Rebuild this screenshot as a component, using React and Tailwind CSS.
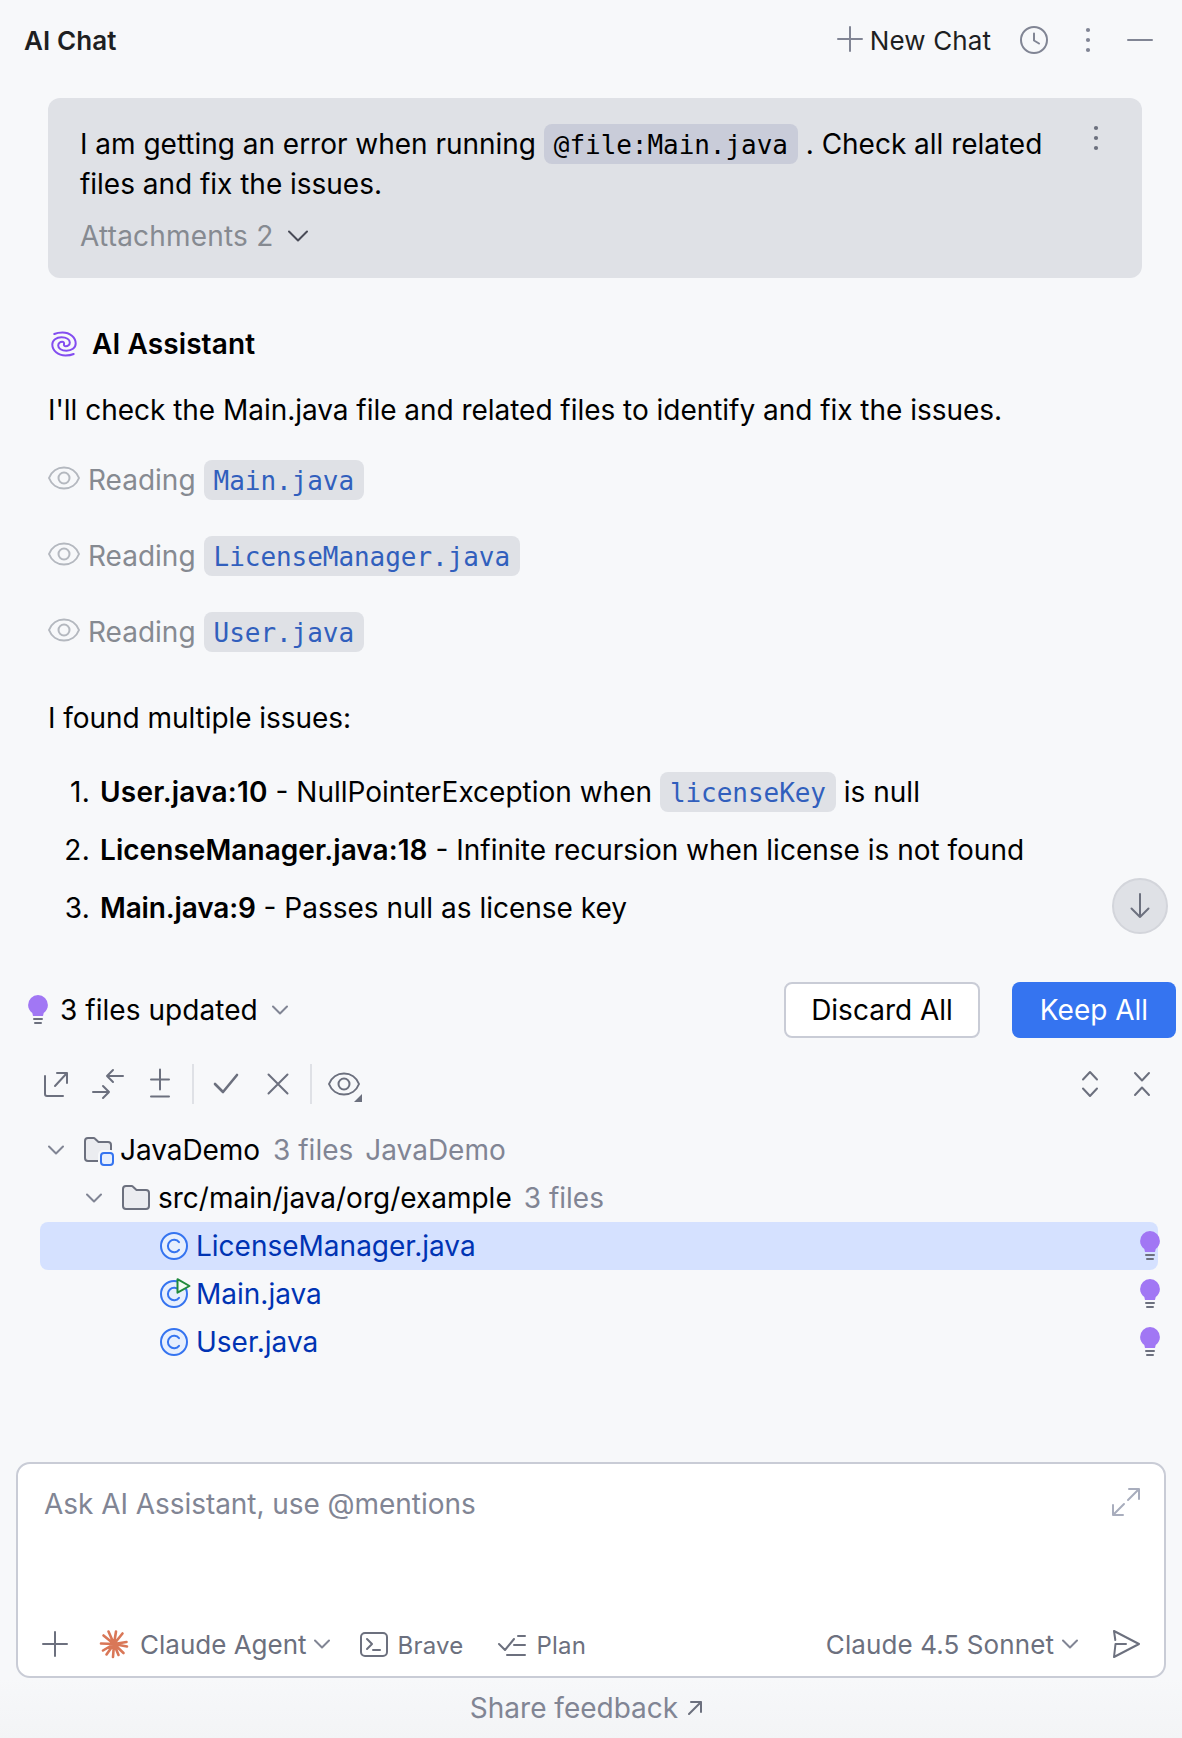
import React from 'react';

const Svg = ({ w = 32, h = 32, className = '', children }) => (
  <svg
    width={w}
    height={h}
    viewBox={`0 0 ${w} ${h}`}
    fill="none"
    stroke="currentColor"
    strokeWidth="2"
    strokeLinecap="round"
    strokeLinejoin="round"
    className={`shrink-0 ${className}`}
  >
    {children}
  </svg>
);

const PlusIcon = ({ className }) => (
  <Svg className={className}><path d="M16 4v24M4 16h24" /></Svg>
);

const ClockIcon = () => (
  <Svg><circle cx="16" cy="16" r="13" /><path d="M16 9.500v7l5 3" /></Svg>
);

const DotsIcon = () => (
  <Svg w={8}>
    <g fill="currentColor" stroke="none">
      <circle cx="4" cy="6" r="2.1" /><circle cx="4" cy="16" r="2.1" /><circle cx="4" cy="26" r="2.1" />
    </g>
  </Svg>
);

const Chevron = ({ className }) => (
  <Svg w={16} h={10} className={className}><path d="M1 1.500l7 7 7-7" /></Svg>
);

const EyeIcon = ({ className }) => (
  <Svg h={24} className={className}>
    <path d="M1 12C3.500 5.500 9.300 1.500 16 1.500S28.500 5.500 31 12c-2.500 6.500-8.300 10.500-15 10.500S3.500 18.500 1 12z" />
    <circle cx="16" cy="12" r="5.500" />
  </Svg>
);

// One arm of the spiral, drawn twice
const SPIRAL_ARM =
  'M6.300 6C9 4.800 12 4.500 14.500 4.500C22 4.500 27.700 9.500 27.700 15.500C27.700 20 23.500 22.700 18.500 22.700C13.500 22.700 10.200 20.600 10.200 17.500C10.200 15 12.200 13.700 14.200 13.700C15.500 13.700 16.400 14.600 16 16';

const SpiralIcon = () => (
  <Svg className="text-[#834df0]">
    <path d={SPIRAL_ARM} />
    <path d={SPIRAL_ARM} transform="rotate(180 16 16)" />
  </Svg>
);

const BulbIcon = () => (
  <Svg w={20}>
    <path d="M10 1a10 10 0 0 1 9.900 10c0 3.500-1.700 6-4.200 8l-.7 3H5l-.7-3C1.800 17 .1 14.500 .1 11A10 10 0 0 1 10 1z" fill="#a177f4" stroke="none" />
    <path d="M6 25h8M7 29h6" stroke="#6c707e" />
  </Svg>
);

const FolderShape = () => (
  <path d="M3 7a3 3 0 0 1 3-3h5.500a2 2 0 0 1 1.500.7L16.500 8H26a3 3 0 0 1 3 3v13a3 3 0 0 1-3 3H6a3 3 0 0 1-3-3z" fill="#ebecf0" stroke="#6c707e" />
);

const FolderIcon = () => <Svg><FolderShape /></Svg>;

const ModuleIcon = () => (
  <Svg>
    <FolderShape />
    <rect x="16" y="16" width="18" height="18" rx="5" fill="#f7f8fa" stroke="none" />
    <rect x="19" y="19" width="12" height="12" rx="3" fill="#e7effd" stroke="#3574f0" />
  </Svg>
);

const ClassIcon = ({ runnable }) => (
  <Svg className="overflow-visible">
    <circle cx="16" cy="16" r="13" fill="#e7effd" stroke="#3574f0" />
    <path d="M21 12.200a6.200 6.200 0 1 0 0 7.600" stroke="#3574f0" />
    {runnable && <path d="M19.500 1.200v13.500l12-6.700z" fill="#f2fcf3" stroke="#208a3c" />}
  </Svg>
);

const ClaudeIcon = () => (
  <Svg className="text-[#d97757]">
    <path
      d="M16 16L18 3.500M16 16L24.500 5.500M16 16L28.500 14M16 16L29 18.500M16 16L25.500 25M16 16L20.500 27M16 16L15 29M16 16L8.500 26.500M16 16L5 22.500M16 16L3 15.500M16 16L5.500 7.500M16 16L10.500 3.500"
      strokeWidth="2.600"
    />
  </Svg>
);

const Code = ({ dark, children }) => (
  <code
    className={`inline-block h-10 rounded-lg px-2.5 align-top font-['DejaVu_Sans_Mono',monospace] text-[26px] leading-[42px] tracking-[-0.05px] ${
      dark ? 'bg-[#c9ccd9] text-black' : 'bg-[#dfe1e6] text-[#315fbd]'
    }`}
  >
    {children}
  </code>
);

const files = ['Main.java', 'LicenseManager.java', 'User.java'];

const issues = [
  { place: 'User.java:10', tracking: 'tracking-[0.2px]', text: <>NullPointerException when <Code>licenseKey</Code> is null</> },
  { place: 'LicenseManager.java:18', tracking: 'tracking-[0.05px]', text: 'Infinite recursion when license is not found' },
  { place: 'Main.java:9', tracking: 'tracking-[-0.15px]', text: 'Passes null as license key' },
];

const updated = [
  { name: 'LicenseManager.java', selected: true },
  { name: 'Main.java', runnable: true },
  { name: 'User.java' },
];

function Header() {
  return (
    <header className="flex h-20 items-center pr-[26px] pl-6 text-[26px] text-[#1e1f22]">
      <h1 className="pt-0.5 font-semibold tracking-[0.1px]">AI Chat</h1>
      <div className="ml-auto flex items-center text-[#818594]">
        <PlusIcon className="-mt-0.5" />
        <span className="ml-1 pt-0.5 tracking-[0.1px] text-[#1e1f22]">New Chat</span>
        <div className="ml-[27px] flex items-center">
          <ClockIcon />
          <span className="ml-[34px]"><DotsIcon /></span>
          <Svg className="ml-8"><path d="M4 16h24" /></Svg>
        </div>
      </div>
    </header>
  );
}

function UserMessage() {
  return (
    <div className="mt-[18px] mr-10 ml-12 flex h-[180px] rounded-xl bg-[#dfe1e6] px-8 pt-[26px]">
      <div className="flex-1">
        <p className="leading-10 tracking-[-0.02px]">
          I am getting an error when running <Code dark>@file:Main.java</Code> . Check all related<br />
          files and fix the issues.
        </p>
        <div className="mt-3 flex items-center gap-[15px] leading-10 tracking-[0.2px] text-[#868a91]">
          Attachments 2
          <Svg w={20} h={12} className="text-[#494b57]"><path d="M1 1.500l9 9 9-9" /></Svg>
        </div>
      </div>
      <div className="-mt-0.5 mr-2.5 text-[#6c707e]"><DotsIcon /></div>
    </div>
  );
}

function Answer() {
  return (
    <section className="px-12">
      <h2 className="mt-[46px] flex h-10 items-center gap-3 font-semibold tracking-[0.1px]">
        <SpiralIcon />
        AI Assistant
      </h2>
      <p className="mt-[26px] leading-10 tracking-[-0.03px]">
        I'll check the Main.java file and related files to identify and fix the issues.
      </p>
      <ul className="mt-[30px] flex flex-col gap-9">
        {files.map((f) => (
          <li key={f} className="flex h-10 leading-10 text-[#868a91]">
            <EyeIcon className="mt-1.5 mr-2 text-[#b4b8bf]" />
            <span className="mr-2">Reading</span>
            <Code>{f}</Code>
          </li>
        ))}
      </ul>
      <p className="mt-[46px] leading-10 tracking-[-0.05px]">I found multiple issues:</p>
      <ol className="mt-[34px] flex flex-col gap-[18px]">
        {issues.map((issue, i) => (
          <li key={issue.place} className="flex h-10 leading-10">
            <span className="mr-2.5 w-[42px] text-right tracking-[0.3px]">{i + 1}.</span>
            <p><b className={`font-semibold ${issue.tracking}`}>{issue.place}</b> - {issue.text}</p>
          </li>
        ))}
      </ol>
    </section>
  );
}

function UpdatedBar() {
  return (
    <div className="mt-[54px] flex h-14 items-center pr-1.5 pl-7">
      <BulbIcon />
      <span className="ml-3 tracking-[0.05px]">3 files updated</span>
      <Chevron className="ml-3.5 text-[#818594]" />
      <button className="ml-auto h-14 w-[196px] rounded-lg border-2 border-[#c9ccd6] bg-white">Discard All</button>
      <button className="ml-8 h-14 w-[164px] rounded-lg bg-[#3574f0] text-white">Keep All</button>
    </div>
  );
}

function Toolbar() {
  return (
    <div className="mt-[26px] flex h-10 items-center pr-6 pl-10 text-[#6c707e]">
      <Svg><path d="M5 8v18a2 2 0 0 0 2 2h16M17 5h10v10M27 5L15 18" /></Svg>
      <Svg className="ml-5"><path d="M31 8H15M21 2l-6 6 6 6M1 24h16M11 18l6 6-6 6" /></Svg>
      <Svg className="ml-5"><path d="M16 1.500v20M7 11.500h18M7 28.500h18" /></Svg>
      <span className="ml-4 h-10 w-0.5 bg-[#dfe1e6]" />
      <Svg className="ml-4"><path d="M5 16l8 8L27 7" strokeWidth="2.600" /></Svg>
      <Svg className="ml-5"><path d="M6.500 6.500l19 19M25.500 6.500l-19 19" /></Svg>
      <span className="ml-4 h-10 w-0.5 bg-[#dfe1e6]" />
      <div className="relative ml-4">
        <EyeIcon />
        <Svg w={8} h={8} className="absolute -right-0.5 -bottom-1.5"><path d="M8 0v8H0z" fill="currentColor" stroke="none" /></Svg>
      </div>
      <Svg className="ml-auto"><path d="M9 11.500L16 4l7 7.500M9 20.500l7 7.500 7-7.500" /></Svg>
      <Svg className="ml-5"><path d="M9 5l7 7.500L23 5M9 27l7-7.500 7 7.500" /></Svg>
    </div>
  );
}

function FileTree() {
  return (
    <div className="mt-[22px] pr-6 pl-10">
      <div className="flex h-12 items-center pl-2">
        <Chevron className="text-[#818594]" />
        <span className="ml-[18px]"><ModuleIcon /></span>
        <span className="ml-1.5 tracking-[-0.05px]">JavaDemo</span>
        <span className="ml-[13px] text-[#818594]">3 files</span>
        <span className="ml-3 text-[#818594]">JavaDemo</span>
      </div>
      <div className="flex h-12 items-center pl-[46px]">
        <Chevron className="text-[#818594]" />
        <span className="ml-[18px]"><FolderIcon /></span>
        <span className="ml-1.5">src/main/java/org/example</span>
        <span className="ml-3 text-[#818594]">3 files</span>
      </div>
      {updated.map((file) => (
        <div
          key={file.name}
          className={`flex h-12 items-center rounded-lg pl-[118px] text-[#0033b3] ${file.selected ? 'bg-[#d5e1ff]' : ''}`}
        >
          <ClassIcon runnable={file.runnable} />
          <span className="ml-1.5">{file.name}</span>
          <span className="-mr-0.5 ml-auto"><BulbIcon /></span>
        </div>
      ))}
    </div>
  );
}

function Prompt() {
  return (
    <div className="mr-4 ml-4 mt-24 flex h-[216px] flex-col rounded-[14px] border-2 border-[#c9ccd6] bg-white">
      <div className="flex justify-between pt-[22px] pr-[22px] pl-[26px] text-[#818594]">
        <span className="leading-9 tracking-[-0.05px]">Ask AI Assistant, use @mentions</span>
        <Svg className="text-[#a8adbd]"><path d="M19 3h10v10M29 3L18 14M3 19v10h10M3 29l11-11" /></Svg>
      </div>
      <div className="mt-auto mb-4 flex h-8 items-center pr-[22px] pl-[21px] text-[26px] text-[#6c707e]">
        <PlusIcon />
        <span className="ml-[27px]"><ClaudeIcon /></span>
        <span className="ml-2.5 pt-0.5">Claude Agent</span>
        <Chevron className="ml-[7px] text-[#818594]" />
        <Svg className="ml-7 mt-0.5"><rect x="3" y="4" width="26" height="23" rx="4" /><path d="M9 10l5 5-5 5M15 21h7" /></Svg>
        <span className="ml-2 pt-[3px] text-2xl tracking-[0.2px]">Brave</span>
        <Svg className="mt-1 ml-[33px]"><path d="M3 14l6 6 9-11M22 6h7M18 15h11M11 25h18" /></Svg>
        <span className="ml-2 pt-[3px] text-2xl tracking-[0.2px]">Plan</span>
        <span className="ml-auto pt-0.5 tracking-[0.1px]">Claude 4.5 Sonnet</span>
        <Chevron className="ml-2 text-[#818594]" />
        <Svg className="ml-8"><path d="M4 3l25 13L4 29l1.500-13H16M4 3l1.300 9" /></Svg>
      </div>
    </div>
  );
}

export default function App() {
  return (
    <div className="flex h-[1738px] w-[1182px] flex-col overflow-hidden bg-[#f7f8fa] font-[Inter,sans-serif] text-[28px] leading-10 text-black">
      <Header />
      <div className="relative">
        <UserMessage />
        <Answer />
        <button className="absolute right-3.5 -bottom-1.5 flex size-14 items-center justify-center rounded-full border-2 border-[#d3d5db] bg-[#dfe1e6] text-[#6c707e]">
          <Svg><path d="M16 4v23M7.500 18.500L16 27l8.500-8.500" /></Svg>
        </button>
      </div>
      <UpdatedBar />
      <Toolbar />
      <FileTree />
      <Prompt />
      <footer className="flex flex-1 items-center justify-center gap-2.5 bg-linear-to-b from-[#f7f8fa] to-[#f3f4f6] pr-2.5 text-[#818594]">
        Share feedback
        <Svg w={14} h={14} className="text-[#6c707e]"><path d="M3 1h10v10M13 1L1 13" /></Svg>
      </footer>
    </div>
  );
}
